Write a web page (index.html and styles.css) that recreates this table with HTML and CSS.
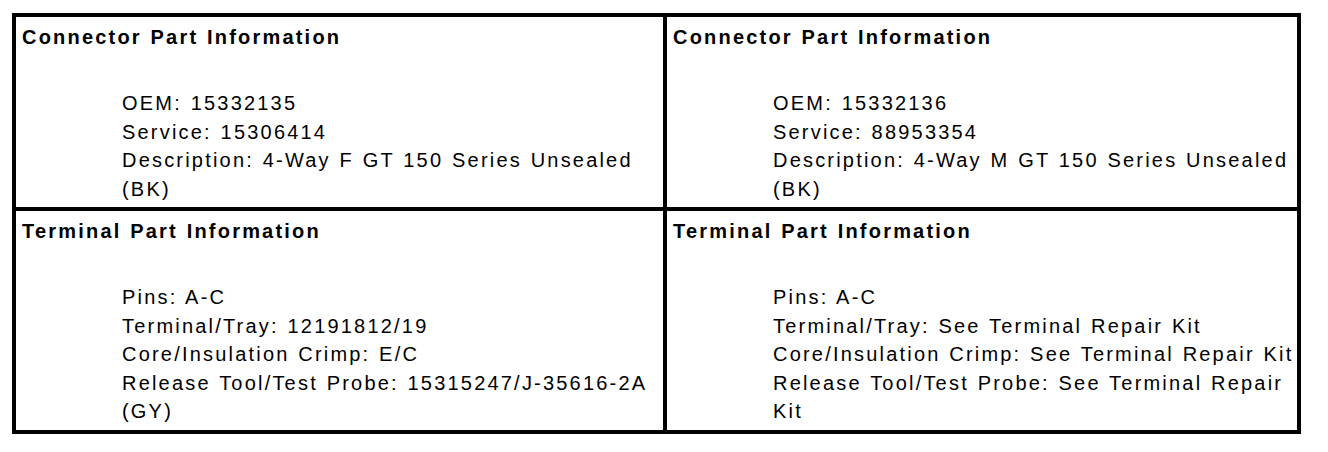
FILE: index.html
```html
<!DOCTYPE html>
<html>
<head>
<meta charset="utf-8">
<link rel="stylesheet" href="styles.css">
</head>
<body>
<div class="parts">
  <div class="cell">
    <div class="heading">Connector Part Information</div>
    <ul class="items">
      <li>OEM: 15332135</li>
      <li>Service: 15306414</li>
      <li>Description: 4-Way F GT 150 Series Unsealed (BK)</li>
    </ul>
  </div>
  <div class="cell">
    <div class="heading">Connector Part Information</div>
    <ul class="items">
      <li>OEM: 15332136</li>
      <li>Service: 88953354</li>
      <li>Description: 4-Way M GT 150 Series Unsealed (BK)</li>
    </ul>
  </div>
  <div class="cell">
    <div class="heading">Terminal Part Information</div>
    <ul class="items">
      <li>Pins: A-C</li>
      <li>Terminal/Tray: 12191812/19</li>
      <li>Core/Insulation Crimp: E/C</li>
      <li>Release Tool/Test Probe: 15315247/J-35616-2A (GY)</li>
    </ul>
  </div>
  <div class="cell">
    <div class="heading">Terminal Part Information</div>
    <ul class="items">
      <li>Pins: A-C</li>
      <li>Terminal/Tray: See Terminal Repair Kit</li>
      <li>Core/Insulation Crimp: See Terminal Repair Kit</li>
      <li>Release Tool/Test Probe: See Terminal Repair Kit</li>
    </ul>
  </div>
</div>
</body>
</html>
```

FILE: styles.css
```css
html, body {
  margin: 0;
  padding: 0;
  background: #ffffff;
}

body {
  padding: 13px 0 0 12px;
  font-family: "Liberation Sans", Arial, sans-serif;
  color: #000000;
}

.parts {
  display: grid;
  grid-template-columns: 647px 630px;
  gap: 4px;
  padding: 4px;
  background: #000000;
  width: max-content;
}

.cell {
  background: #ffffff;
  padding: 6px 0 4px 6px;
}

.heading {
  font-weight: bold;
  font-size: 20px;
  letter-spacing: 2.2px;
  word-spacing: 1px;
  line-height: 28.5px;
}

.items {
  list-style: none;
  margin: 37.5px 0 0 0;
  padding: 0 0 0 100px;
  font-size: 20px;
  letter-spacing: 2.2px;
  word-spacing: 1px;
  line-height: 28.5px;
}
```
